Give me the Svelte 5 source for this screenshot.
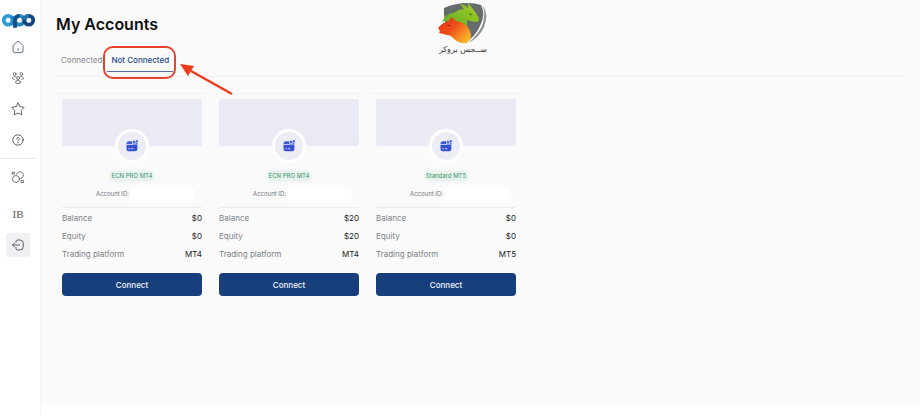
<script lang="ts">
  interface Account {
    id: number;
    type: string;
    balance: string;
    equity: string;
    platform: string;
  }

  const tabs = ['Connected', 'Not Connected'];

  const accounts: Account[] = [
    { id: 1, type: 'ECN PRO MT4', balance: '$0', equity: '$0', platform: 'MT4' },
    { id: 2, type: 'ECN PRO MT4', balance: '$20', equity: '$20', platform: 'MT4' },
    { id: 3, type: 'Standard MT5', balance: '$0', equity: '$0', platform: 'MT5' }
  ];

  let activeTab = $state('Not Connected');
</script>

<div class="layout">
  <nav class="sidebar">
    <a class="logo" href="#home" aria-label="opo">
      <svg width="33" height="16" viewBox="0 0 33 16" fill="none" stroke-width="3.8">
        <circle cx="6.2" cy="7.2" r="4.4" stroke="#2c9bd6" />
        <path d="M10.6 3v9.2" stroke="#258dc9" />
        <circle cx="17.4" cy="7.2" r="4.4" stroke="#2486c2" />
        <path d="M13 7.2v7.6" stroke="#164c88" />
        <path d="M13 7.5A4.4 4.4 0 0 1 17.4 2.8" stroke="#164c88" />
        <circle cx="26.8" cy="7.2" r="4.4" stroke="#18457f" />
        <path d="M22.4 7.2A4.4 4.4 0 0 1 26.8 2.8" stroke="#2271ad" />
      </svg>
    </a>

    <div class="group">
      <a class="item" href="#home" aria-label="Home">
        <svg width="14" height="14" viewBox="0 0 14 14" stroke="#565b83">
          <path d="M2 6.2Q2 5.3 2.7 4.7L5.8 1.9Q7 .9 8.2 1.9L11.3 4.7Q12 5.3 12 6.2V10.8Q12 12.6 10.2 12.6H3.8Q2 12.6 2 10.8Z" />
          <path d="M7 8.6v1.8" />
        </svg>
      </a>
      <a class="item" href="#partners" aria-label="Partners">
        <svg width="14" height="14" viewBox="0 0 14 14" stroke="#66676c">
          <circle cx="3.7" cy="3" r="1.4" />
          <circle cx="10.3" cy="3" r="1.4" />
          <circle cx="7" cy="7" r="1.5" />
          <path d="M4.7 5.8C2.8 5.1 1.5 6.1 1.5 7.7Q1.8 8.4 3.4 8.4M9.3 5.8C11.2 5.1 12.5 6.1 12.5 7.7Q12.2 8.4 10.6 8.4" />
          <ellipse cx="7" cy="11.1" rx="2.5" ry="1.6" />
        </svg>
      </a>
      <a class="item" href="#favorites" aria-label="Favorites">
        <svg width="14" height="14" viewBox="0 0 14 14" stroke="#505158">
          <path d="M7 .9L8.8 4.5L13.2 5.3L10.2 8.6L10.8 12.9L7 11L3.2 12.9L3.8 8.6L.8 5.3L5.2 4.5Z" />
        </svg>
      </a>
      <a class="item" href="#help" aria-label="Help">
        <svg width="14" height="14" viewBox="0 0 14 14" stroke="#505158">
          <circle cx="7" cy="7" r="5.2" />
          <path d="M5.7 5.9C5.7 3.9 8.4 4 8.3 5.8C8.2 6.7 7 6.7 7 7.8M7 9.2v.7" />
        </svg>
      </a>
    </div>

    <div class="group second">
      <a class="item" href="#exchange" aria-label="Exchange">
        <svg width="14" height="14" viewBox="0 0 14 14" stroke="#66676c">
          <circle cx="5" cy="9" r="3.5" />
          <path d="M5.5 4.2A3.5 3.5 0 1 1 9.8 8.5" />
          <path d="M1.5 2.2h2v2h-2ZM10.6 10.6h2v2h-2Z" />
        </svg>
      </a>
      <a class="item ib" href="#ib">IB</a>
      <button class="item logout" aria-label="Log out">
        <svg width="14" height="14" viewBox="0 0 14 14" stroke="#505158">
          <path d="M5 4.5V3.6Q5 2 6.6 2H9Q12.2 2 12.2 5V9Q12.2 12 9 12H6.6Q5 12 5 10.4V9.5" />
          <path d="M8.5 7H1.5M3.5 5L1.5 7L3.5 9" />
        </svg>
      </button>
    </div>
  </nav>

  <main>
    <h1>My Accounts</h1>

    <div class="brand">
      <svg width="52" height="42" viewBox="0 0 52 42">
        <defs>
          <linearGradient id="bull" x1="0" y1="1" x2="1" y2="0">
            <stop offset="0" stop-color="#4da526" />
            <stop offset="1" stop-color="#a6ce25" />
          </linearGradient>
          <linearGradient id="bear" x1="0" y1="0" x2="1" y2="0.7">
            <stop offset="0" stop-color="#e52a19" />
            <stop offset="0.5" stop-color="#ee4f18" />
            <stop offset="1" stop-color="#fbb52b" />
          </linearGradient>
        </defs>
        <path d="M7 6Q18 1 31 1Q38 1 44 3Q49 12 43 24Q38 35 29 40Q18 38 12 28Q6 18 7 6Z" fill="#666b6c" />
        <path d="M46 3Q52 13 47 25Q42 36 31 41Q40 34 45 24Q49 13 46 3Z" fill="#8c9292" />
        <path d="M5 20Q9 11 17 11Q22 7 27 7L23 2Q29 3 31 6L31 1L36 7Q40 12 42 17Q42 20 38 20Q33 19 30 18Q29 28 35 36Q24 34 19 24Q13 17 5 20Z" fill="url(#bull)" />
        <path d="M1 26Q6 20 12 19L14 15L19 19Q29 20 33 29Q36 36 30 41Q22 42 17 37Q14 33 10 33L2 31Q4 29 1 26Z" fill="url(#bear)" />
        <path d="M32 11L36 13L33 13Z" fill="#365b1d" />
        <path d="M10 23L14 23L12 24Z" fill="#761715" />
      </svg>
      <span lang="fa" dir="rtl">ســجس بروکر</span>
    </div>

    <div class="tabs" role="tablist">
      {#each tabs as tab}
        <button
          class="tab"
          class:active={activeTab === tab}
          role="tab"
          aria-selected={activeTab === tab}
          onclick={() => (activeTab = tab)}
        >
          {tab}
        </button>
      {/each}

      <!-- callout around the second tab -->
      <div class="callout">
        <svg class="arrow" width="56" height="36" viewBox="0 0 56 36">
          <path d="M13 11L54 34" stroke="#f03a1c" stroke-width="2.5" />
          <path d="M2 4L16 6L10 16Z" fill="#f03a1c" />
        </svg>
      </div>
    </div>

    <section class="cards">
      {#each accounts as account (account.id)}
        <article class="card">
          <div class="banner">
            <div class="avatar">
              <svg width="14" height="14" viewBox="0 0 14 14">
                <path d="M1.5 5Q1.5 2.3 4 2.3H7.3V5Z" fill="#3e5bd0" />
                <path d="M8 1.8H10.5V4.2H8ZM11 1.2H13V3.2H11ZM11 3.8H12.4V5.4H8V4.8H11Z" fill="#456bd3" />
                <path d="M1.5 5.8H12.4V10Q12.4 12.3 10.2 12.3H3.7Q1.5 12.3 1.5 10Z" fill="#3650cf" />
                <path d="M3.4 9.7H5M6 9.7H8.4" stroke="#dfe5ff" stroke-width=".9" />
              </svg>
            </div>
          </div>

          <span class="badge">{account.type}</span>

          <div class="account-id">
            <span>Account ID:</span>
            <span class="hidden-id"></span>
          </div>

          <dl>
            <div class="row"><dt>Balance</dt><dd>{account.balance}</dd></div>
            <div class="row"><dt>Equity</dt><dd>{account.equity}</dd></div>
            <div class="row"><dt>Trading platform</dt><dd>{account.platform}</dd></div>
          </dl>

          <button class="connect">Connect</button>
        </article>
      {/each}
    </section>
  </main>
</div>

<style>
  :global(body) {
    background: #fff;
  }

  .layout {
    display: flex;
    min-height: 100vh;
    font-family: Inter, "Noto Sans", sans-serif;
    font-size: 8px;
    line-height: 12px;
    color: #202226;
  }

  button {
    font: inherit;
    border: none;
    padding: 0;
    cursor: pointer;
  }

  .sidebar {
    flex: none;
    width: 40px;
    display: flex;
    flex-direction: column;
    background: #fff;
    border-right: 1px solid #f5f5f6;
  }

  .logo {
    display: flex;
    padding: 13px 0 0 2px;
  }

  .group {
    display: flex;
    flex-direction: column;
    align-items: center;
    gap: 7px;
    width: 36px;
    padding: 6px 0;
  }

  .group.second {
    border-top: 1px solid #e5e5e9;
  }

  .item {
    display: flex;
    align-items: center;
    justify-content: center;
    width: 24px;
    height: 24px;
    border-radius: 2px;
    background: none;
    text-decoration: none;
  }

  .item svg {
    fill: none;
    stroke-width: 0.9;
    stroke-linecap: round;
    stroke-linejoin: round;
  }

  .ib {
    margin-top: 6px;
    font-family: "Liberation Serif", serif;
    font-size: 11px;
    color: #55565c;
  }

  .logout {
    background: #f0f0f4;
  }

  main {
    position: relative;
    flex: 1;
    min-width: 0;
    box-sizing: border-box;
    margin-bottom: 10px;
    padding: 12px 15px 16px;
    background: #fafafa;
  }

  h1 {
    margin: 0;
    font-size: 16px;
    line-height: 24px;
    font-weight: 600;
    color: #101113;
  }

  .brand {
    position: absolute;
    top: 2px;
    left: 48%;
    display: flex;
    flex-direction: column;
    align-items: center;
    transform: translateX(-50%);
    font-family: "DejaVu Sans", sans-serif;
    font-size: 8px;
    color: #333638;
    white-space: nowrap;
  }

  .tabs {
    position: relative;
    display: flex;
    gap: 1px;
    height: 41px;
    box-sizing: border-box;
    padding: 13px 0 0 1px;
    border-bottom: 1px solid #f0f0f1;
  }

  .tab {
    height: 23px;
    padding: 0 4px;
    border-bottom: 1px solid transparent;
    background: none;
    color: #85878d;
  }

  .tab.active {
    color: #274a87;
    border-color: #5571a2;
    font-weight: 500;
  }

  .callout {
    position: absolute;
    top: 10px;
    left: 47px;
    width: 69px;
    height: 29px;
    border: 2px solid #e9432f;
    border-radius: 10px;
    pointer-events: none;
  }

  .arrow {
    position: absolute;
    top: 12px;
    left: 73px;
  }

  .cards {
    display: grid;
    grid-template-columns: repeat(auto-fill, 150px);
    gap: 7px;
    padding-top: 16px;
  }

  .card {
    display: flex;
    flex-direction: column;
    padding: 5px 4px 5px 6px;
    border-top: 1px solid #f2f2f3;
  }

  .banner {
    display: flex;
    justify-content: center;
    align-items: flex-end;
    height: 47px;
    border-radius: 3px;
    background: #e9eaf4;
  }

  .avatar {
    display: flex;
    align-items: center;
    justify-content: center;
    width: 28px;
    height: 28px;
    margin-bottom: -17px;
    border: 3px solid #fefefe;
    border-radius: 50%;
    background: #ebecf4;
  }

  .badge {
    align-self: center;
    margin-top: 25px;
    padding: 0 2px;
    border-radius: 5px;
    background: #e9f3ee;
    box-shadow: 0 0 3px #e0eee7;
    font-size: 6px;
    line-height: 10px;
    color: #37956b;
  }

  .account-id {
    display: flex;
    align-items: center;
    gap: 1px;
    height: 26px;
    padding-left: 34px;
    border-bottom: 1px solid #ececee;
    font-size: 6px;
    color: #75777c;
  }

  .hidden-id {
    width: 65px;
    height: 15px;
    border-radius: 6px;
    background: #fff;
  }

  dl {
    margin: 0;
    padding: 1px 0 10px;
  }

  .row {
    display: flex;
    justify-content: space-between;
    line-height: 18px;
  }

  dt {
    color: #7c7f85;
  }

  dd {
    margin: 0;
    color: #202226;
  }

  .connect {
    height: 23px;
    border-radius: 4px;
    background: #173f7b;
    color: #f3f6fb;
    font-weight: 500;
  }
</style>
